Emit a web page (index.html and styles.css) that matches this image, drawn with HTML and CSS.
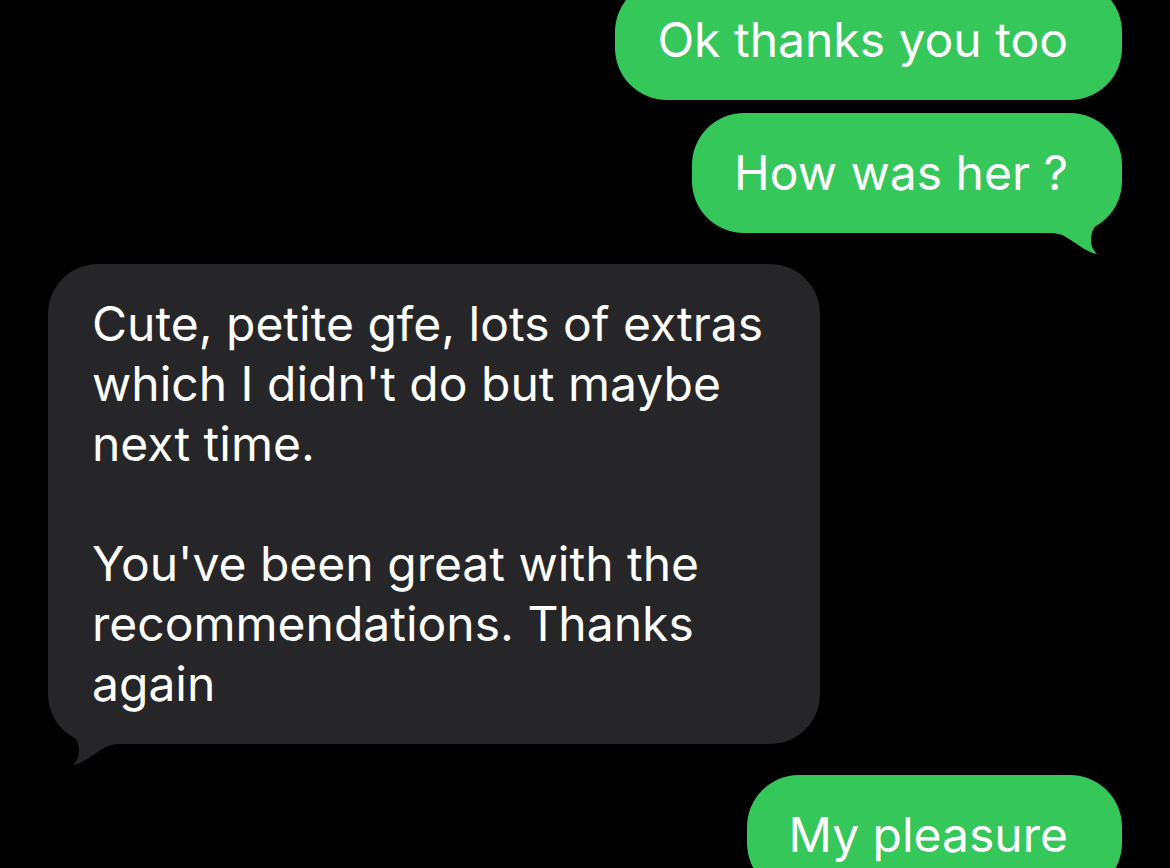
FILE: index.html
```html
<!DOCTYPE html>
<html lang="en">
<head>
    <meta charset="UTF-8">
    <meta name="viewport" content="width=device-width, initial-scale=1.0">
    <title>Messages</title>
    <link rel="stylesheet" href="styles.css">
</head>
<body>
<div class="thread">
    <div class="row sent">
        <div class="bubble green first">Ok thanks you too</div>
    </div>
    <div class="row sent">
        <div class="bubble green has-tail">How was her ?
            <svg class="tail tail-right" viewBox="0 0 72 74" width="72" height="74"><path d="M0 30 H52 L50 42 C44 46 41 52 41 60 C41 66 43 70 47 74 C38 73 26 63 16 57 C11 54 6 53 0 53 Z"/></svg>
        </div>
    </div>
    <div class="row received">
        <div class="bubble gray has-tail long">Cute, petite gfe, lots of extras<br>which I didn't do but maybe<br>next time.<br><br>You've been great with the<br>recommendations. Thanks<br>again
            <svg class="tail tail-left" viewBox="0 0 72 74" width="72" height="74"><path d="M0 30 H52 L50 42 C44 46 41 52 41 60 C41 66 43 70 47 74 C38 73 26 63 16 57 C11 54 6 53 0 53 Z"/></svg>
        </div>
    </div>
    <div class="row sent">
        <div class="bubble green">My pleasure</div>
    </div>
</div>
</body>
</html>
```

FILE: styles.css
```css
html, body {
    margin: 0;
    padding: 0;
    background-color: #000;
    height: 100%;
    overflow: hidden;
}

body {
    font-family: Inter, "Noto Sans", sans-serif;
    color: #fff;
}

.thread {
    display: flex;
    flex-direction: column;
    padding: 0 48px;
    margin-top: -20px;
}

.row {
    display: flex;
}

.row.sent {
    justify-content: flex-end;
}

.row.received {
    justify-content: flex-start;
}

.row + .row {
    margin-top: 13px;
}

.row.received,
.row.received + .row {
    margin-top: 31px;
}

.bubble {
    position: relative;
    font-size: 48px;
    line-height: 60px;
    padding: 30px 54px 30px 42px;
    border-radius: 52px;
}

.bubble.green {
    background-color: #35c759;
}

.bubble.gray {
    background-color: #262629;
}

.bubble.long {
    width: 772px;
    box-sizing: border-box;
    padding: 30px 44px 30px 44px;
    border-radius: 50px;
}

.tail {
    position: absolute;
    bottom: -21px;
}

.tail-right {
    right: 0;
    fill: #35c759;
}

.tail-left {
    left: 0;
    fill: #262629;
    transform: scaleX(-1);
}
```
